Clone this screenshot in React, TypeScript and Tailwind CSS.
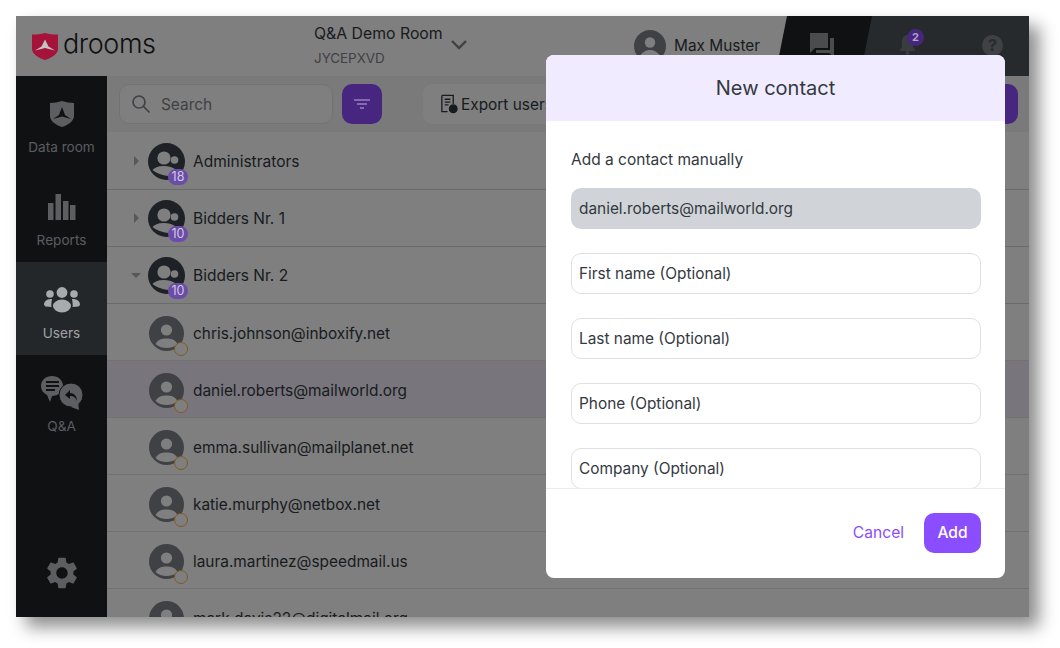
const font = '[font-family:Inter,"Noto_Sans",sans-serif]';

function Logo() {
  return (
    <svg className="relative z-[2]" width="26" height="27" viewBox="0 0 26 27">
      <path d="M0 1.5 C5 1.5 9 1.5 13 0 C17 1.5 21 1.5 26 1.5 V16 C26 21 19 25 13 27 C7 25 0 21 0 16 Z" fill="#a5123a" />
      <path d="M13 6.5 L16.5 13.5 L23 17.5 L13 15 L3 17.5 L9.5 13.5 Z" fill="#c4c4c4" />
    </svg>
  );
}

function GroupAvatar({ count }: { count: string }) {
  return (
    <div className="relative w-[37px] h-[37px] shrink-0">
      <svg width="37" height="37" viewBox="0 0 37 37">
        <circle cx="18.5" cy="18.5" r="18.5" fill="#3c444c" />
        <circle cx="16" cy="15" r="6.6" fill="#ffffff" />
        <circle cx="26.5" cy="17" r="3.8" fill="#ffffff" />
        <path d="M4.5 27 C8 23.5 12 23 16 23 C20 23 24 24 27 26 L24 33 C16 33 10 31 4.5 27 Z" fill="#ffffff" />
      </svg>
      <div className="absolute z-[2] left-[20px] top-[26px] w-[20px] h-[16px] rounded-full bg-[#6b4ca8] text-[#cfc8e0] text-[12.5px] leading-[16px] text-center">{count}</div>
    </div>
  );
}

function UserAvatar() {
  return (
    <div className="relative w-[35px] h-[35px] shrink-0">
      <svg width="35" height="35" viewBox="0 0 35 35">
        <circle cx="17.5" cy="17.5" r="17.5" fill="#7e838a" />
        <circle cx="17.5" cy="14" r="5.6" fill="#ffffff" />
        <path d="M6.5 28 C9 23.5 13 22.5 17.5 22.5 C22 22.5 26 23.5 28.5 28 C25 31 21 32 17.5 32 C14 32 10 31 6.5 28 Z" fill="#ffffff" />
      </svg>
      <div className="absolute left-[25px] top-[26px] w-[14px] h-[14px] rounded-full border border-[#ffb43c] bg-[#ffffff]" />
    </div>
  );
}

function GroupRow({ name, count, open }: { name: string; count: string; open?: boolean }) {
  return (
    <div className="h-[57px] shrink-0 flex items-center border-b border-[#d6d6d6] pl-[21px]">
      <div className="w-[16px] flex justify-center">
        {open ? (
          <div className="w-0 h-0 border-l-[5px] border-r-[5px] border-t-[5px] border-l-transparent border-r-transparent border-t-[#adb0b5]" />
        ) : (
          <div className="w-0 h-0 border-t-[5px] border-b-[5px] border-l-[5px] border-t-transparent border-b-transparent border-l-[#adb0b5]" />
        )}
      </div>
      <div className="ml-[4px]"><GroupAvatar count={count} /></div>
      <span className="ml-[8px] mt-[2px] text-[15.5px] text-[#33393f]">{name}</span>
    </div>
  );
}

function UserRow({ email, active }: { email: string; active?: boolean }) {
  return (
    <div className={`h-[57px] shrink-0 flex items-center border-b border-[#e4e4e4] pl-[42px] pt-[2px] ${active ? "bg-[#f0ecf8]" : ""}`}>
      <UserAvatar />
      <span className="ml-[9px] mt-[2px] text-[15.4px] text-[#33393f]">{email}</span>
    </div>
  );
}

function NavItem({ label, active, children }: { label: string; active?: boolean; children: React.ReactNode }) {
  return (
    <div className={`h-[93px] pt-[6px] flex flex-col items-center justify-center gap-[6px] ${active ? "bg-[#484e54]" : ""}`}>
      <div className={`h-[36px] flex items-center justify-center ${active ? "relative z-[2]" : ""}`}>{children}</div>
      <span className={`text-[13.6px] leading-[18px] ${active ? "relative z-[2] text-[#a0a3a6]" : "text-[#b2b8c0]"}`}>{label}</span>
    </div>
  );
}

function Field({ label }: { label: string }) {
  return (
    <div className="h-[41px] shrink-0 rounded-[10px] border border-[#dfe0e3] flex items-center px-[7px] text-[15.4px] text-[#33393f]">{label}</div>
  );
}

export default function App() {
  return (
    <div className={`w-[1060px] h-[648px] bg-white overflow-hidden pl-[16px] pt-[16px] ${font}`}>
      <div className="relative w-[1013px] h-[601px] overflow-hidden shadow-[10px_10px_16px_rgba(0,0,0,0.45)] flex flex-col bg-white">
        <header className="h-[60px] shrink-0 flex bg-white">
          <div className="w-[298px] shrink-0 flex items-center pl-[16px] gap-[5px]">
            <Logo />
            <span className="text-[27px] leading-[32px] mb-[4px] tracking-[-0.4px] text-[#202226] font-light">drooms</span>
          </div>
          <div className="flex items-center">
            <div className="w-[136px] shrink-0 flex flex-col">
              <span className="text-[15.8px] leading-[24px] whitespace-nowrap text-[#33393f]">Q&amp;A Demo Room</span>
              <span className="text-[13.4px] leading-[24px] whitespace-nowrap text-[#7e838a]">JYCEPXVD</span>
            </div>
            <svg className="shrink-0 mb-[3px]" width="18" height="12" viewBox="0 0 18 12"><path d="M2 2 L9 9 L16 2" fill="none" stroke="#7e838a" strokeWidth="2.4" /></svg>
            <div className="ml-[166px] shrink-0 w-[32px] h-[32px]">
              <svg width="32" height="32" viewBox="0 0 32 32"><circle cx="16" cy="16" r="16" fill="#7e838a" /><circle cx="16" cy="12.5" r="5.2" fill="#fff" /><path d="M6 26 C9 21 13 20 16 20 C19 20 23 21 26 26 C22 29 19 30 16 30 C13 30 10 29 6 26 Z" fill="#fff" /></svg>
            </div>
            <span className="ml-[8px] shrink-0 text-[15.4px] text-[#33393f]">Max Muster</span>
          </div>
        </header>
        <div className="flex-1 flex min-h-0">
          <aside className="w-[91px] shrink-0 bg-[#202226] flex flex-col">
            <NavItem label="Data room"><svg width="24" height="26" viewBox="0 0 24 26"><path d="M0 2 Q6 2 12 0 Q18 2 24 2 V15 C24 20 18 24 12 26 C6 24 0 20 0 15 Z" fill="#b8bcc2" /><path d="M12 6 L15 14 L21 18 L12 15.5 L3 18 L9 14 Z" fill="#202226" /></svg></NavItem>
            <NavItem label="Reports"><svg width="28" height="26" viewBox="0 0 28 26" fill="#b8bcc2"><rect x="0" y="9" width="5.5" height="17" /><rect x="7.5" y="0" width="5.5" height="26" /><rect x="15" y="7" width="5.5" height="19" /><rect x="22" y="11" width="5.5" height="15" /></svg></NavItem>
            <NavItem label="Users" active><svg width="36" height="26" viewBox="0 0 36 26" fill="#a8abae"><circle cx="6" cy="7" r="3.8" /><circle cx="18" cy="5.5" r="5.4" /><circle cx="30" cy="7" r="3.8" /><ellipse cx="18" cy="19" rx="9" ry="6.5" /><path d="M0 18 C0 13 4 12 8 12 C7.5 15 7 18 7.5 20 L1.5 19.5 Z" /><path d="M36 18 C36 13 32 12 28 12 C28.5 15 29 18 28.5 20 L34.5 19.5 Z" /></svg></NavItem>
            <NavItem label="Q&A"><svg width="42" height="34" viewBox="0 0 42 34"><path d="M11 0 C17 0 22 4 22 10 C22 16 17 20 11 20 L9 26 L6 19 C2 17 0 14 0 10 C0 4 5 0 11 0 Z" fill="#b8bcc2" /><path d="M5 6 H18 M5 10 H18 M5 14 H14" stroke="#202226" strokeWidth="1.8" /><circle cx="30" cy="19" r="12" fill="#b8bcc2" stroke="#202226" strokeWidth="1" /><path d="M30 31 L38 34 L37 25 Z" fill="#b8bcc2" /><path d="M29 14 L24 19 L29 23 V20 C33 20 35 22 36 25 C36 20 33 17 29 17 Z" fill="#202226" /></svg></NavItem>
            <div className="mt-auto h-[88px] flex items-center justify-center">
              <svg width="38" height="38" viewBox="0 0 24 24" fill="#b8bcc2"><path d="M19.14 12.94c.04-.3.06-.61.06-.94 0-.32-.02-.64-.07-.94l2.03-1.58a.49.49 0 0 0 .12-.61l-1.92-3.32a.488.488 0 0 0-.59-.22l-2.39.96c-.5-.38-1.03-.7-1.62-.94l-.36-2.54a.484.484 0 0 0-.48-.41h-3.84c-.24 0-.43.17-.47.41l-.36 2.54c-.59.24-1.13.57-1.62.94l-2.39-.96c-.22-.08-.47 0-.59.22L2.74 8.87c-.12.21-.08.47.12.61l2.03 1.58c-.05.3-.09.63-.09.94s.02.64.07.94l-2.03 1.58a.49.49 0 0 0-.12.61l1.92 3.32c.12.22.37.29.59.22l2.39-.96c.5.38 1.03.7 1.62.94l.36 2.54c.05.24.24.41.48.41h3.84c.24 0 .44-.17.47-.41l.36-2.54c.59-.24 1.13-.56 1.62-.94l2.39.96c.22.08.47 0 .59-.22l1.92-3.32c.12-.22.07-.47-.12-.61l-2.01-1.58zM12 15.6c-1.98 0-3.6-1.62-3.6-3.6s1.62-3.6 3.6-3.6 3.6 1.62 3.6 3.6-1.62 3.6-3.6 3.6z" /></svg>
            </div>
          </aside>
          <main className="flex-1 min-w-0 flex flex-col overflow-hidden">
            <div className="h-[56px] shrink-0 bg-[#f4f5f6] flex items-center pl-[12px] gap-[9px]">
              <div className="w-[214px] h-[40px] rounded-[10px] bg-white border border-[#e4e4e4] flex items-center pl-[11px] gap-[10px]">
                <svg width="20" height="20" viewBox="0 0 20 20" fill="none" stroke="#7e838a" strokeWidth="1.7"><circle cx="8" cy="8" r="6" /><path d="M12.5 12.5 L18.5 18.5" /></svg>
                <span className="mt-[2px] text-[15.4px] text-[#7e838a]">Search</span>
              </div>
              <div className="w-[40px] h-[40px] rounded-[10px] bg-[#8e4cff] flex items-center justify-center">
                <svg className="relative z-[2]" width="16" height="10" viewBox="0 0 16 10" stroke="#9a7fc4" strokeWidth="1.5"><path d="M0 1 H16 M3 5 H13 M6 9 H10" /></svg>
              </div>
              <div className="ml-[32px] h-[40px] pl-[16px] pr-[60px] rounded-[10px] bg-white flex items-center gap-[3px]">
                <svg width="19" height="20" viewBox="0 0 20 20" fill="none" stroke="#33393f" strokeWidth="1.4"><path d="M3 1 H15 V10 M3 1 V18 H9" /><path d="M6 5 H12 M6 8 H12 M6 11 H10" /><circle cx="15" cy="15" r="4" fill="#33393f" /></svg>
                <span className="mt-[2px] text-[15.4px] text-[#33393f] whitespace-nowrap">Export users</span>
              </div>
              <div className="ml-auto mr-[11px] w-[60px] h-[40px] rounded-[10px] bg-[#8e4cff]" />
            </div>
            <div className="pt-px flex flex-col">
              <GroupRow name="Administrators" count="18" />
              <GroupRow name="Bidders Nr. 1" count="10" />
              <GroupRow name="Bidders Nr. 2" count="10" open />
              <UserRow email="chris.johnson@inboxify.net" />
              <UserRow email="daniel.roberts@mailworld.org" active />
              <UserRow email="emma.sullivan@mailplanet.net" />
              <UserRow email="katie.murphy@netbox.net" />
              <UserRow email="laura.martinez@speedmail.us" />
              <UserRow email="mark.davis22@digitalmail.org" />
            </div>
          </main>
        </div>
        {/* dark chat / notification tabs in the header */}
        <div className="absolute right-0 top-0 w-[175px] h-[60px] bg-[#4e5459]" />
        <div className="absolute left-[759px] top-0 w-[97px] h-[60px] bg-[#202226] [clip-path:polygon(12px_0,100%_0,calc(100%-12px)_100%,0_100%)]" />
        <svg className="absolute left-[794px] top-[17px]" width="24" height="24" viewBox="0 0 24 24" fill="#95989c"><path d="M0 0 H18 V15 H5 L0 20 Z" /><path d="M20 5 H24 V24 L19 20 H6 V17 H20 Z" /></svg>
        <svg className="absolute left-[884px] top-[19px]" width="15" height="20" viewBox="0 0 15 20" fill="#757a80"><path d="M7.5 0 C11 0 13 3 13 7 V12 L15 15 V16 H0 V15 L2 12 V7 C2 3 4 0 7.5 0 Z" /><circle cx="7.5" cy="18" r="2" /></svg>
        <div className="absolute z-[2] left-[891px] top-[13px] w-[17px] h-[17px] rounded-full bg-[#472680] text-[#b0a8c0] text-[11px] leading-[17px] font-bold text-center">2</div>
        <div className="absolute left-[966px] top-[19px] w-[21px] h-[21px] rounded-full bg-[#7e838a] text-[#4e5459] text-[16px] leading-[21px] font-bold text-center">?</div>
        {/* overlay and dialog */}
        <div className="absolute z-[1] inset-0 bg-black/50" />
        <div className="absolute z-[3] left-[530px] top-[39px] w-[459px] h-[523px] bg-white rounded-[8px] flex flex-col overflow-hidden">
          <div className="h-[66px] shrink-0 bg-[#f0ebfe] flex items-center justify-center text-[20px] text-[#33393f]">New contact</div>
          <div className="h-[367px] shrink-0 overflow-hidden pl-[25px] pr-[24px] pt-[29px] flex flex-col">
            <div className="text-[15.5px] leading-[20px] text-[#33393f]">Add a contact manually</div>
            <div className="mt-[18px] h-[41px] shrink-0 rounded-[10px] bg-[#d0d4d8] flex items-center px-[8px] text-[15.4px] text-[#33393f]">daniel.roberts@mailworld.org</div>
            <div className="mt-[24px] flex flex-col gap-[24px]">
              <Field label="First name (Optional)" />
              <Field label="Last name (Optional)" />
              <Field label="Phone (Optional)" />
              <Field label="Company (Optional)" />
            </div>
          </div>
          <div className="flex-1 border-t border-[#ecebf2] flex items-center justify-end pr-[24px] pb-[2px] gap-[20px]">
            <span className="text-[15.6px] text-[#8a4dff]">Cancel</span>
            <div className="w-[57px] h-[40px] rounded-[10px] bg-[#8a4dff] flex items-center justify-center text-[15.6px] font-medium text-white">Add</div>
          </div>
        </div>
      </div>
    </div>
  );
}
